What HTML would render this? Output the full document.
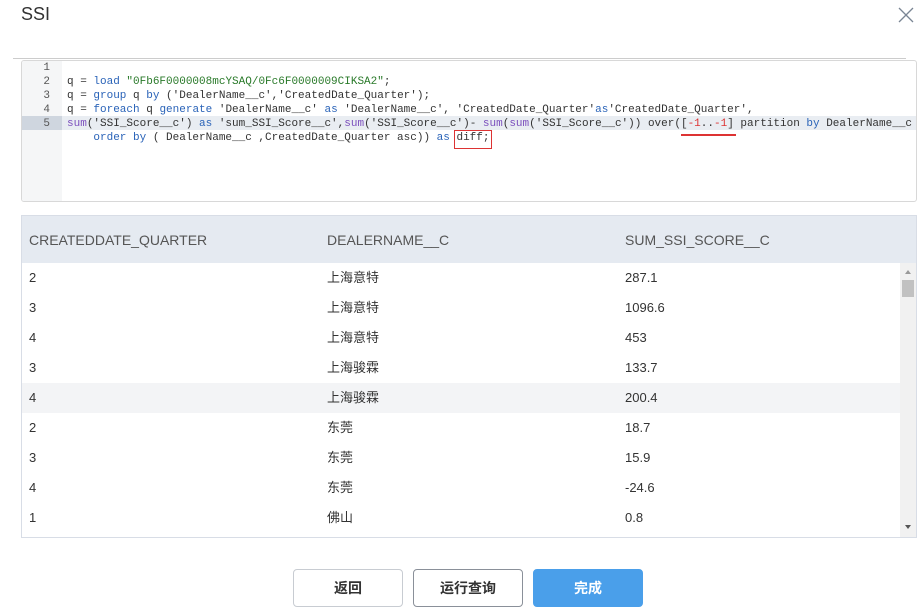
<!DOCTYPE html>
<html><head><meta charset="utf-8"><style>
body{margin:0;width:919px;height:615px;background:#fff;font-family:"Liberation Sans","Noto Sans CJK SC",sans-serif;position:relative;overflow:hidden;color:#333}
.title{position:absolute;left:21px;top:4px;font-size:18px;color:#333}
.hr{position:absolute;left:13px;right:13px;top:58px;border-top:1px solid #ccc}
.ed{position:absolute;left:21px;top:60px;width:894px;height:140px;border:1px solid #d8d8d8;border-radius:3px;overflow:hidden;font-family:"Liberation Mono",monospace;font-size:11px}
.gut{position:absolute;left:0;top:0;width:40px;height:140px;background:#f5f6f7}
.ln{position:absolute;height:14px;line-height:14px;white-space:pre;color:#333}
.num{width:28px;text-align:right;color:#555}
.k{color:#2a63b8}.s{color:#2a7a2a}.r{color:#d33}.p{color:#7b4fbd}
.tbl{position:absolute;left:21px;top:215px;width:894px;height:321px;border:1px solid #d8dde6;overflow:hidden}
.th{position:absolute;left:0;top:0;width:894px;height:47px;background:#e5eaf1;font-size:14px;color:#555}
.row{position:absolute;left:0;width:878px;height:30px;font-size:13px;color:#333}
.c{position:absolute;top:7px;line-height:16px;height:16px}
.btn{position:absolute;top:569px;width:110px;height:38px;border:1px solid #c8ccd2;border-radius:4px;font-size:14px;text-align:center;line-height:36px;font-weight:bold;color:#333;box-sizing:border-box}
</style></head><body>
<div class="title">SSI</div>
<svg style="position:absolute;left:898px;top:7px" width="16" height="16"><path d="M1 1L15 15M15 1L1 15" stroke="#7a8594" stroke-width="1.3"/></svg>
<div class="hr"></div>
<div class="ed">
<div class="gut"></div>
<div style="position:absolute;left:0;top:55px;width:894px;height:14px;background:#e9edf2"></div>
<div style="position:absolute;left:0;top:55px;width:40px;height:14px;background:#cfd6df"></div>
<div class="ln num" style="top:0">1</div>
<div class="ln num" style="top:14px">2</div>
<div class="ln num" style="top:28px">3</div>
<div class="ln num" style="top:42px">4</div>
<div class="ln num" style="top:56px">5</div>
<div class="ln" style="left:45px;top:14px">q = <span class="k">load</span> <span class="s">"0Fb6F0000008mcYSAQ/0Fc6F0000009CIKSA2"</span>;</div>
<div class="ln" style="left:45px;top:28px">q = <span class="k">group</span> q <span class="k">by</span> ('DealerName__c','CreatedDate_Quarter');</div>
<div class="ln" style="left:45px;top:42px">q = <span class="k">foreach</span> q <span class="k">generate</span> 'DealerName__c' <span class="k">as</span> 'DealerName__c', 'CreatedDate_Quarter'<span class="k">as</span>'CreatedDate_Quarter',</div>
<div class="ln" style="left:45px;top:56px"><span class="p">sum</span>('SSI_Score__c') <span class="k">as</span> 'sum_SSI_Score__c',<span class="p">sum</span>('SSI_Score__c')- <span class="p">sum</span>(<span class="p">sum</span>('SSI_Score__c')) over([<span class="r">-1</span>..<span class="r">-1</span>] partition <span class="k">by</span> DealerName__c</div>
<div class="ln" style="left:45px;top:70px">    <span class="k">order by</span> ( DealerName__c ,CreatedDate_Quarter asc)) <span class="k">as</span> diff;</div>
<div style="position:absolute;left:432px;top:69px;width:36px;height:17px;border:1px solid #d33"></div>
<div style="position:absolute;left:659px;top:73px;width:55px;height:2px;background:#d33"></div>
</div>
<div class="tbl">
<div class="th"><span class="c" style="left:7px;top:16px">CREATEDDATE_QUARTER</span><span class="c" style="left:305px;top:16px">DEALERNAME__C</span><span class="c" style="left:603px;top:16px">SUM_SSI_SCORE__C</span></div>
<div class="row" style="top:47px"><span class="c" style="left:7px">2</span><span class="c" style="left:305px">上海意特</span><span class="c" style="left:603px">287.1</span></div>
<div class="row" style="top:77px"><span class="c" style="left:7px">3</span><span class="c" style="left:305px">上海意特</span><span class="c" style="left:603px">1096.6</span></div>
<div class="row" style="top:107px"><span class="c" style="left:7px">4</span><span class="c" style="left:305px">上海意特</span><span class="c" style="left:603px">453</span></div>
<div class="row" style="top:137px"><span class="c" style="left:7px">3</span><span class="c" style="left:305px">上海骏霖</span><span class="c" style="left:603px">133.7</span></div>
<div class="row" style="top:167px;background:#f3f4f6"><span class="c" style="left:7px">4</span><span class="c" style="left:305px">上海骏霖</span><span class="c" style="left:603px">200.4</span></div>
<div class="row" style="top:197px"><span class="c" style="left:7px">2</span><span class="c" style="left:305px">东莞</span><span class="c" style="left:603px">18.7</span></div>
<div class="row" style="top:227px"><span class="c" style="left:7px">3</span><span class="c" style="left:305px">东莞</span><span class="c" style="left:603px">15.9</span></div>
<div class="row" style="top:257px"><span class="c" style="left:7px">4</span><span class="c" style="left:305px">东莞</span><span class="c" style="left:603px">-24.6</span></div>
<div class="row" style="top:287px"><span class="c" style="left:7px">1</span><span class="c" style="left:305px">佛山</span><span class="c" style="left:603px">0.8</span></div>
<div style="position:absolute;left:878px;top:47px;width:16px;height:274px;background:#f1f1f1"></div>
<div style="position:absolute;left:883px;top:54px;width:0;height:0;border:3px solid transparent;border-bottom:4px solid #999;border-top:0"></div>
<div style="position:absolute;left:880px;top:64px;width:12px;height:17px;background:#c1c1c1"></div>
<div style="position:absolute;left:883px;top:309px;width:0;height:0;border:3px solid transparent;border-top:4px solid #555;border-bottom:0"></div>
</div>
<div class="btn" style="left:293px">返回</div>
<div class="btn" style="left:413px;border-color:#8a9099">运行查询</div>
<div class="btn" style="left:533px;background:#4a9fea;border-color:#4a9fea;color:#fff">完成</div>
</body></html>
